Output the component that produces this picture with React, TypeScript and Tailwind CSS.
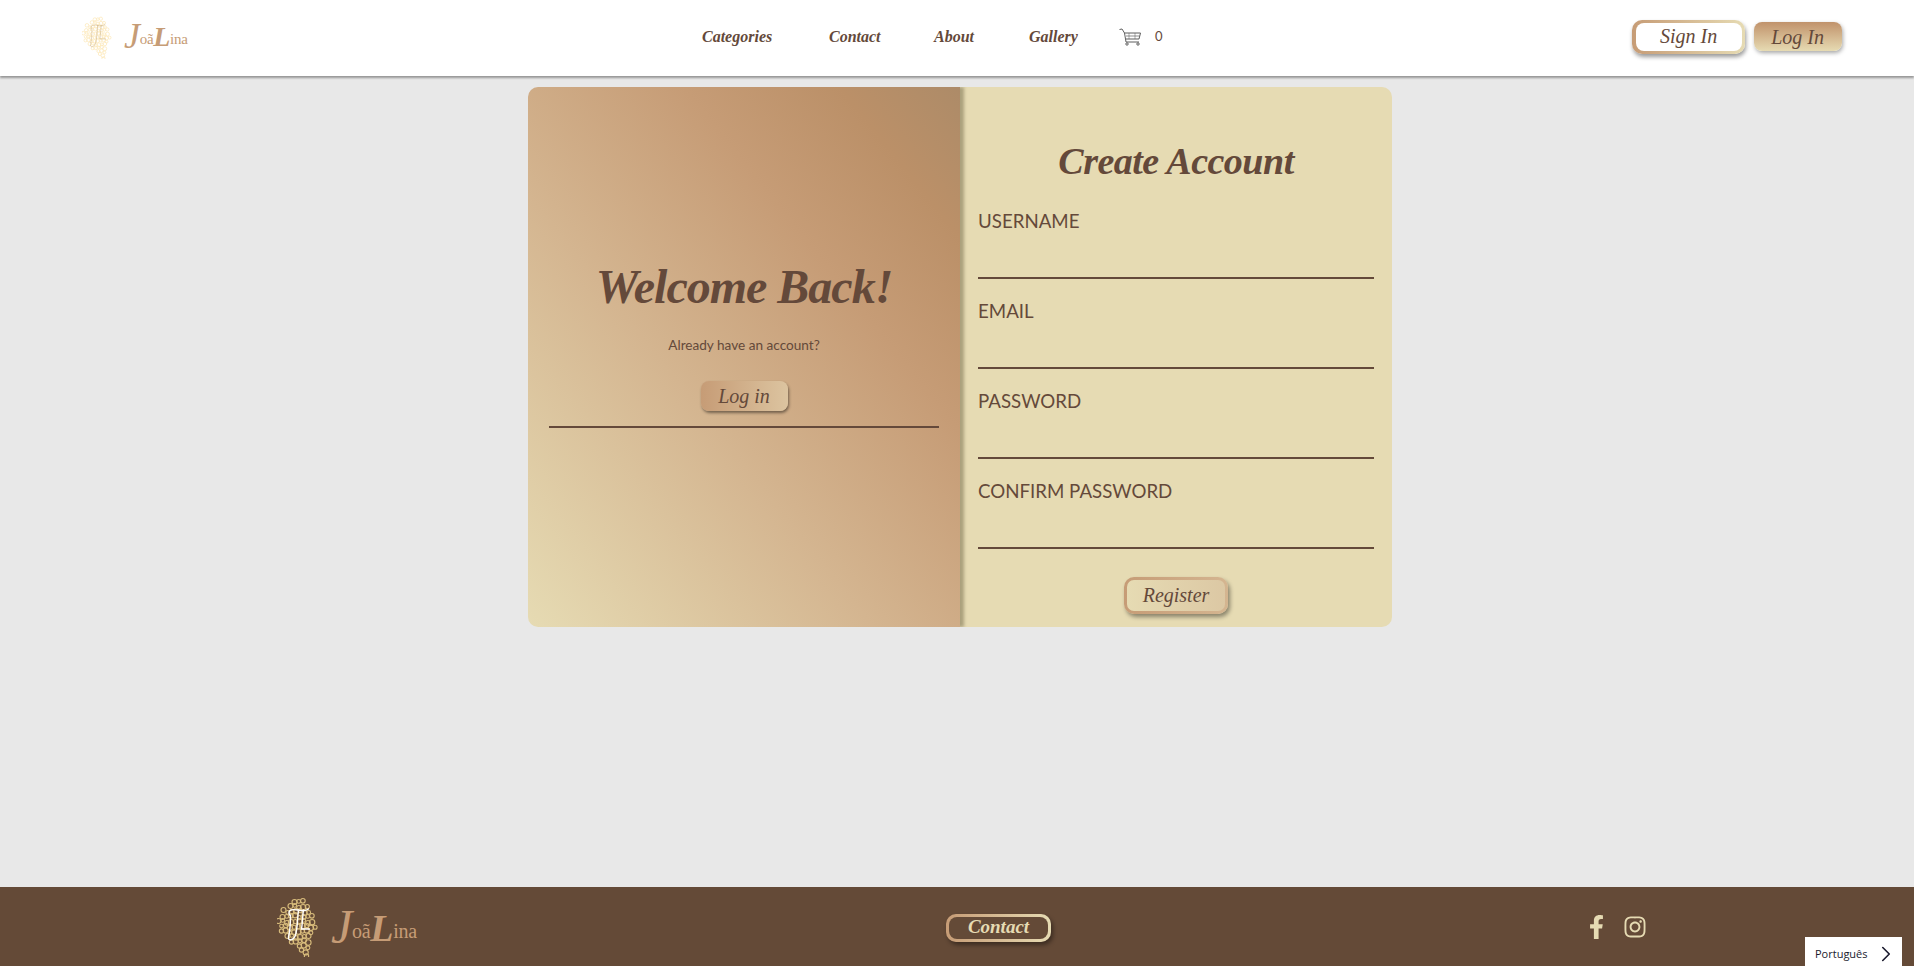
import { ChevronRight } from 'lucide-react'
import { FaFacebookF, FaInstagram } from 'react-icons/fa'

const script = "font-['Liberation_Serif',serif] italic"

// outline of the logo's grape cluster, one [y, left, right] per band
const bands = [
  [4, 17, 26], [9, 11, 30], [14, 6, 33], [19, 3, 36], [24, 1, 38], [29, 2, 39],
  [34, 4, 36], [39, 8, 34], [44, 14, 33], [49, 20, 32], [54, 24, 31], [58, 27, 30],
]

const bubbles = bands.flatMap(([y, left, right], row) => {
  const out: { x: number; y: number; r: number }[] = []
  for (let x = left + (row % 2) * 2; x <= right; x += 4.2) {
    out.push({ x, y: y + ((x * 7) % 3) - 1, r: 1.8 + ((x + row) % 3) * 0.35 })
  }
  return out
})

function LogoMark({ className, bubble, mono, monoWidth }: { className: string; bubble: string; mono: string; monoWidth: number }) {
  return (
    <svg viewBox="0 0 40 60" className={className} fill="none">
      {bubbles.map((b, i) => (
        <circle key={i} cx={b.x} cy={b.y} r={b.r} stroke={bubble} strokeWidth="1.1" />
      ))}
      <path
        d="M12 18c-2-5 2-6 8-5s8 1 11-1M13 18c0 8-1 18-2 22-1 4 5 4 7-2 2-6 2-17 3-25M26 13c-1 6-1 14-2 19h8"
        stroke={mono}
        strokeWidth={monoWidth}
        strokeLinecap="round"
      />
    </svg>
  )
}

function LogoText({ size }: { size: 'sm' | 'lg' }) {
  const lg = size === 'lg'
  return (
    <span className={`flex items-baseline font-['Liberation_Serif',serif] tracking-[-0.3px] text-[#c69c76] ${lg ? 'pb-[10px] text-[20px]' : 'pb-[10px] text-[15px]'}`}>
      <span className={`italic ${lg ? 'translate-y-[5px] text-[48px] leading-[48px]' : 'translate-y-[4px] text-[36px] leading-[36px]'}`}>J</span>
      <span>oã</span>
      <span className={`font-bold italic ${lg ? 'translate-y-[3px] text-[38px] leading-[38px]' : 'translate-y-[2px] text-[28px] leading-[28px]'}`}>L</span>
      <span>ina</span>
    </span>
  )
}

function CartIcon() {
  return (
    <svg viewBox="0 0 22 18" className="h-[18px] w-[22px]" fill="none" stroke="#5f5f5f" strokeWidth="1">
      <path d="M0.5 1.5 3 1l2.5 4L7 14h13" />
      <path d="M5.5 5h16l-1.5 6H7" />
      <path d="M7 8h13.5" strokeWidth="0.7" />
      <path d="M10 5v6M16 5v6" strokeWidth="0.5" />
      <circle cx="8" cy="16" r="1.2" />
      <circle cx="19" cy="16" r="1.2" />
    </svg>
  )
}

function Field({ label, type = 'text' }: { label: string; type?: string }) {
  return (
    <div className="h-[90px]">
      <label className="block pt-[18px] text-[18.7px] leading-[28px] text-[#64493a]">{label}</label>
      <input type={type} className="block h-[44px] w-full border-b-2 border-[#64493a] bg-transparent outline-none" />
    </div>
  )
}

export default function App() {
  return (
    <div className="flex h-screen min-h-[966px] flex-col overflow-hidden bg-[#e8e8e8] font-['Lato',sans-serif]">
      {/* Header */}
      <header className="relative z-20 flex h-[76px] shrink-0 items-center bg-white pb-[2px] pl-[82px] shadow-[0_2px_2px_rgba(0,0,0,0.35)]">
        <div className="flex w-[106px] items-center">
          <LogoMark className="h-[43px] w-[30px]" bubble="#fce9bd" mono="#c9ae84" monoWidth={0.7} />
          <div className="ml-[12px]">
            <LogoText size="sm" />
          </div>
        </div>

        <nav className={`ml-[514px] flex items-center text-[16px] font-bold text-[#64493a] ${script}`}>
          <a className="w-[127px]">Categories</a>
          <a className="w-[105px]">Contact</a>
          <a className="w-[95px]">About</a>
          <a className="w-[90px]">Gallery</a>
        </nav>
        <CartIcon />
        <span className="ml-[14px] text-[13px] text-[#64493a]">0</span>

        <div className={`-mt-[1px] ml-[469px] flex items-center gap-[9px] ${script}`}>
          <button className="h-[34px] w-[113px] rounded-[10px] bg-gradient-to-r from-[#c69c76] to-[#e6dbb3] py-[3px] pr-[3px] pl-[4px] shadow-[1px_3px_4px_rgba(0,0,0,0.4)]">
            <span className="flex h-full items-center justify-center rounded-[8px] bg-white pb-[2px] text-[20px] text-[#64493a]">Sign In</span>
          </button>
          <button className="h-[29px] w-[88px] rounded-[8px] bg-gradient-to-b from-[#c0926b] to-[#e6dbb3] pb-[3px] text-[20px] text-[#64493a] shadow-[1px_2px_4px_rgba(0,0,0,0.35)]">
            Log In
          </button>
        </div>
      </header>

      {/* Card */}
      <main className="flex-1 pt-[11px] pl-[528px]">
        <div className="flex h-[540px] w-[864px] overflow-hidden rounded-[10px]">
          <section className="relative z-10 flex w-[432px] flex-col items-center bg-[linear-gradient(to_top_right,#e6dbb3_0%,#d4b590_40%,#c69c76_68%,#bb9068_86%,#ad8b68_100%)] px-[21px] pt-[170px] shadow-[4px_0_3px_rgba(100,90,60,0.45)]">
            <h1 className={`text-[48px] leading-[60px] font-bold tracking-[-1px] text-[#64493a] ${script}`}>Welcome Back!</h1>
            <p className="mt-[16px] text-[13.6px] leading-[24px] text-[#64493a]">Already have an account?</p>
            <button className={`mt-[24px] h-[30px] w-[87px] rounded-[8px] bg-gradient-to-r from-[#c69c76] to-[#dcc4a0] pb-[3px] text-[20px] text-[#64493a] shadow-[1px_2px_3px_rgba(0,0,0,0.45)] ${script}`}>
              Log in
            </button>
            <div className="mt-[15px] h-[2px] w-full bg-[#64493a]" />
          </section>

          <section className="flex w-[432px] flex-col bg-[#e6dbb3] px-[18px]">
            <h2 className={`flex h-[102px] items-center justify-center pt-[47px] text-[38px] font-bold tracking-[-0.5px] text-[#64493a] ${script}`}>Create Account</h2>
            <Field label="USERNAME" />
            <Field label="EMAIL" type="email" />
            <Field label="PASSWORD" type="password" />
            <Field label="CONFIRM PASSWORD" type="password" />
            <button className={`mx-auto mt-[28px] h-[37px] w-[104px] rounded-[10px] bg-gradient-to-r from-[#c69c76] to-[#d4b590] p-[3px] shadow-[2px_3px_4px_rgba(0,0,0,0.4)] ${script}`}>
              <span className="flex h-full items-center justify-center rounded-[7px] bg-gradient-to-r from-[#e6dbb3] to-[#dcc8a4] pb-[2px] text-[20px] text-[#64493a]">Register</span>
            </button>
          </section>
        </div>
      </main>

      {/* Footer */}
      <footer className="flex h-[79px] shrink-0 items-center bg-[#644a37] pl-[277px]">
        <div className="flex w-[141px] items-center">
          <LogoMark className="h-[60px] w-[41px]" bubble="#d8bc7c" mono="#ffffff" monoWidth={1.4} />
          <div className="ml-[13px]">
            <LogoText size="lg" />
          </div>
        </div>
        <button className={`mt-[2px] ml-[528px] h-[28px] w-[105px] rounded-[10px] bg-gradient-to-r from-[#c69c76] to-[#e6dbb3] p-[3px] shadow-[2px_3px_4px_rgba(0,0,0,0.4)] ${script}`}>
          <span className="flex h-full items-center justify-center rounded-[8px] bg-[#644a37] text-[19px] font-bold text-[#e6dbb3]">Contact</span>
        </button>
        <div className="ml-[538px] flex items-center gap-[19px] text-[#e6dbb3]">
          <FaFacebookF className="h-[24px] w-[15px]" />
          <FaInstagram className="h-[24px] w-[24px]" />
        </div>
      </footer>

      {/* Language picker */}
      <div className="fixed top-[937px] left-[1805px] flex h-[34px] w-[97px] items-center justify-between bg-white pr-[3px] pl-[10px] font-['Open_Sans',sans-serif] text-[11px] text-[#1a1a2e]">
        Português
        <ChevronRight className="h-[26px] w-[26px]" strokeWidth={1.5} />
      </div>
    </div>
  )
}
